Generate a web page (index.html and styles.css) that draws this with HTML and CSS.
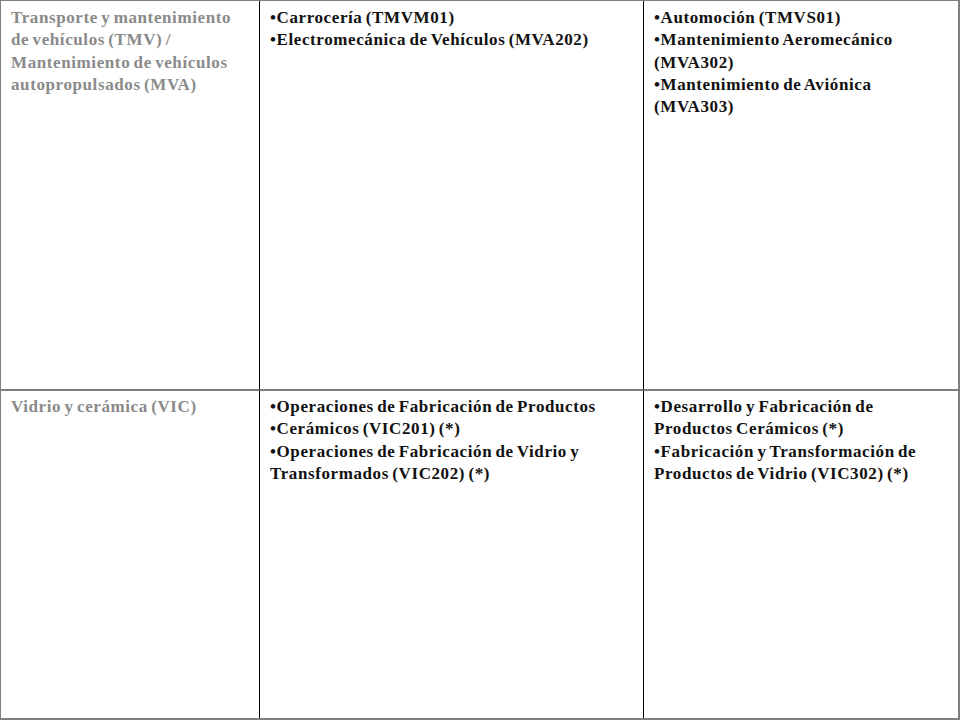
FILE: index.html
```html
<!DOCTYPE html>
<html lang="es">
<head>
<meta charset="utf-8">
<title>Familias profesionales</title>
<link rel="stylesheet" href="styles.css">
</head>
<body>
<div class="grid">
  <div class="cell family top">Transporte y mantenimiento de vehículos (TMV) / Mantenimiento de vehículos autopropulsados (MVA)</div>
  <div class="cell mid top">
    <p>•Carrocería (TMVM01)</p>
    <p>•Electromecánica de Vehículos (MVA202)</p>
  </div>
  <div class="cell right top">
    <p>•Automoción (TMVS01)</p>
    <p>•Mantenimiento Aeromecánico (MVA302)</p>
    <p>•Mantenimiento de Aviónica (MVA303)</p>
  </div>
  <div class="cell family bottom">Vidrio y cerámica (VIC)</div>
  <div class="cell mid bottom">
    <p>•Operaciones de Fabricación de Productos</p>
    <p>•Cerámicos (VIC201) (*)</p>
    <p>•Operaciones de Fabricación de Vidrio y Transformados (VIC202) (*)</p>
  </div>
  <div class="cell right bottom">
    <p>•Desarrollo y Fabricación de Productos Cerámicos (*)</p>
    <p>•Fabricación y Transformación de Productos de Vidrio (VIC302) (*)</p>
  </div>
</div>
</body>
</html>
```
FILE: styles.css
```css
html, body {
  margin: 0;
  padding: 0;
  background: #ffffff;
}
.grid {
  width: 960px;
  height: 720px;
  box-sizing: border-box;
  display: grid;
  grid-template-columns: 259px 384px 1fr;
  grid-template-rows: 390px 1fr;
  border-top: 1px solid #7f7f7f;
  border-left: 1px solid #7f7f7f;
  border-right: 2px solid #7f7f7f;
  border-bottom: 2px solid #7f7f7f;
  font-family: "Liberation Serif", "Times New Roman", serif;
  font-weight: bold;
  font-size: 17px;
  letter-spacing: 0.6px;
  word-spacing: -1.5px;
  line-height: 22.3px;
  color: #111111;
}
.cell {
  box-sizing: border-box;
  padding: 6px 6px 0 10px;
}
.cell p {
  margin: 0;
}
.family {
  color: #8a8a8a;
  padding-right: 14px;
}
.mid, .family {
  border-right: 1px solid #000000;
}
.top {
  border-bottom: 2px solid #7f7f7f;
}
.bottom {
  padding-top: 5px;
}
```
